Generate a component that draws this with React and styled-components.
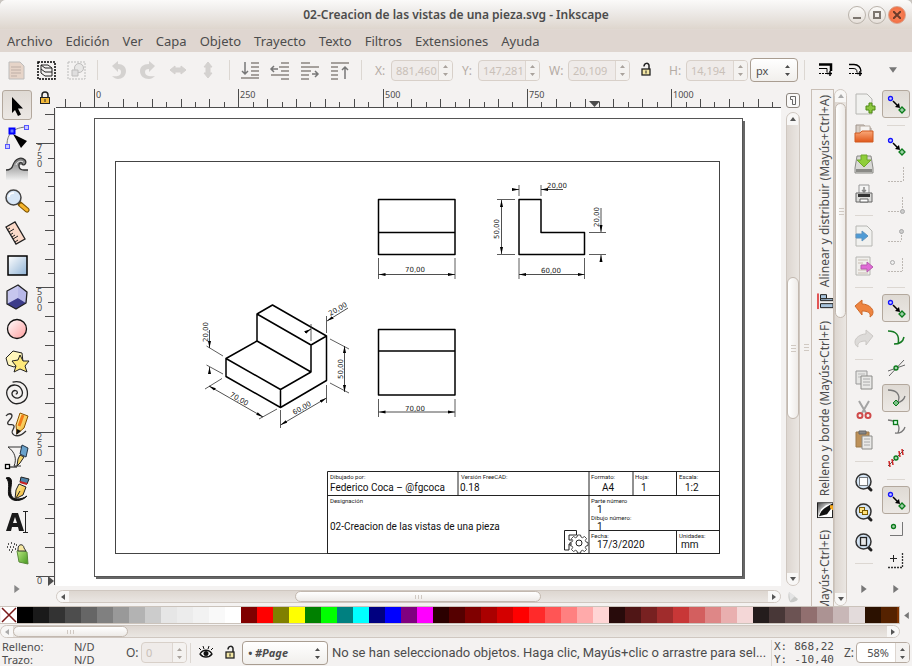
import React from "react";
import styled, { createGlobalStyle, css } from "styled-components";

const GlobalStyle = createGlobalStyle`
  * { box-sizing: border-box; }
  html, body { margin: 0; padding: 0; background: #c9c5c0; }
  body, button, input, select { font-family: "Noto Sans", "Open Sans", sans-serif; font-size: 12px; color: #4c4c4c; }
  button, input, select { margin: 0; padding: 0; border: 0; background: none; }
  svg { display: block; }
`;

/* ---------- window frame ---------- */

const Window = styled.div`
  display: flex;
  flex-direction: column;
  height: 100vh;
  overflow: hidden;
  background: #f4f2f1;
  border-radius: 6px 6px 0 0;
`;

const TitleBar = styled.header`
  display: grid;
  grid-template-columns: 64px 1fr 64px;
  align-items: center;
  flex: none;
  height: 30px;
  background: linear-gradient(#fbfaf9, #f1efed 30%, #ded6ce);
  border-bottom: 1px solid #e0d8d2;
`;

const Title = styled.h1`
  grid-column: 2;
  margin: 0;
  text-align: center;
  font-size: 12px;
  font-weight: 600;
  white-space: nowrap;
`;

const WindowButtons = styled.div`
  display: flex;
  gap: 2px;
`;

const WindowButton = styled.button`
  display: grid;
  place-items: center;
  width: 18px;
  height: 18px;
  border-radius: 50%;
  border: 1px solid ${(p) => (p.$close ? "#d9a08a" : "#b9b2aa")};
  background: ${(p) => (p.$close ? "radial-gradient(#fb8a62, #ee6537)" : "linear-gradient(#fbfaf8, #e6e0da)")};
`;

const MenuBar = styled.nav`
  display: flex;
  align-items: center;
  gap: 13px;
  flex: none;
  height: 22px;
  padding-left: 7px;
  background: #dfd6d0;
`;

const MenuItem = styled.button`
  font-size: 13px;
  line-height: 20px;
`;

/* ---------- controls ---------- */

const ToolBar = styled.div`
  display: flex;
  align-items: center;
  flex: none;
  height: 36px;
  padding: 0 4px 0 1px;
`;

const IconButton = styled.button`
  display: grid;
  place-items: center;
  flex: none;
  width: 30px;
  height: 30px;
  opacity: ${(p) => (p.$faded ? 0.5 : 1)};
  border-radius: 3px;
  ${(p) =>
    p.$pressed &&
    css`
      border: 1px solid #b3a89d;
      background: linear-gradient(#dfdad4, #ece8e4);
    `}
`;

const StatusButton = styled(IconButton)`
  width: 24px;
`;

const SnapButton = styled(IconButton)`
  width: 28px;
  height: 28px;
  margin: 1px 0;
`;

const ToolSeparator = styled.span`
  flex: none;
  width: ${(p) => (p.$narrow ? 6 : 12)}px;
  height: 20px;
  background: linear-gradient(#dcd7d2, #dcd7d2) center / 1px 100% no-repeat;
`;

const ColumnSeparator = styled.span`
  flex: none;
  width: 18px;
  height: 12px;
  background: linear-gradient(#dcd7d2, #dcd7d2) center / 100% 1px no-repeat;
`;

const Field = styled.div`
  display: flex;
  align-items: center;
  flex: none;
  margin-left: ${(p) => p.$gap}px;
`;

const FieldLabel = styled.label`
  width: ${(p) => p.$width}px;
  color: ${(p) => (p.$disabled ? "#b5aca5" : "#4c4c4c")};
`;

const SpinFrame = styled.span`
  display: flex;
  width: ${(p) => p.$width}px;
  height: 21px;
  border: 1px solid ${(p) => (p.$disabled ? "#d8d0c9" : "#b5aaa0")};
  border-radius: 4px;
  background: ${(p) => (p.$disabled ? "#efebe9" : "#ffffff")};
  overflow: hidden;
`;

const SpinInput = styled.input`
  flex: 1;
  min-width: 0;
  padding-left: 4px;
  font-size: 11px;
  text-align: ${(p) => p.$align || "left"};
  &:disabled { color: #c9c0b8; }
`;

const SpinArrows = styled.span`
  display: grid;
  place-items: center;
  width: 14px;
  border-left: 1px solid #ddd6d0;
  background: #f4f2f0;
  color: ${(p) => (p.$disabled ? "#aaa39d" : "#555555")};
`;

const ComboFrame = styled.span`
  display: flex;
  align-items: center;
  flex: none;
  width: ${(p) => p.$width}px;
  height: 24px;
  margin-left: ${(p) => p.$gap}px;
  padding: 0 6px 0 5px;
  border: 1px solid #a99d91;
  border-radius: 4px;
  background: linear-gradient(#ffffff, #f1efec);
`;

const Combo = styled.select`
  appearance: none;
  flex: 1;
  min-width: 0;
  font-size: 11px;
  font-weight: ${(p) => (p.$strong ? 700 : 400)};
  font-style: ${(p) => (p.$strong ? "italic" : "normal")};
`;

const Stretch = styled.span`
  flex: 1;
`;

/* ---------- scroll bars ---------- */

const ScrollFrame = styled.div`
  display: flex;
  flex: ${(p) => p.$fill || "1"};
  flex-direction: ${(p) => (p.$vertical ? "column" : "row")};
  min-width: 0;
  min-height: 0;
  ${(p) => (p.$vertical ? "width: 13px;" : "height: 13px;")}
  border: 1px solid #cfc7c0;
  border-radius: 7px;
  background: linear-gradient(${(p) => (p.$vertical ? "to right" : "to bottom")}, #ddd6d0, #eae6e2);
  overflow: hidden;
`;

const ScrollButton = styled.button`
  display: grid;
  place-items: center;
  flex: none;
  width: ${(p) => (p.$vertical ? 11 : 12)}px;
  height: ${(p) => (p.$vertical ? 12 : 11)}px;
  background: #f8f7f6;
`;

const ScrollGap = styled.span`
  flex: ${(p) => p.$size};
`;

const ScrollThumb = styled.span`
  display: grid;
  place-items: center;
  flex: ${(p) => p.$size};
  border: 1px solid #c2b8af;
  border-radius: 6px;
  background: linear-gradient(${(p) => (p.$vertical ? "to right" : "to bottom")}, #ffffff, #eeebe8);
`;

const Triangle = ({ dir = "down", size = 6, color = "#555" }) => {
  const d = { down: "M0 1h6l-3 4z", up: "M0 5h6l-3-4z", left: "M5 0v6l-4-3z", right: "M1 0v6l4-3z" }[dir];
  return (
    <svg width={size} height={size} viewBox="0 0 6 6" fill={color} aria-hidden="true"><path d={d} /></svg>
  );
};

const Grip = ({ vertical }) => (
  <svg width="8" height="8" viewBox="0 0 8 8" stroke="#d0c9c2" aria-hidden="true">
    <path d={vertical ? "M2 1.500h5M2 4.500h5M2 7.500h5" : "M1.500 2v4M4.500 2v4M7.500 2v4"} />
  </svg>
);

function ScrollBar({ vertical, before, size, after, label, onlyEnd, fill }) {
  const v = vertical || undefined;
  return (
    <ScrollFrame $vertical={v} $fill={fill} aria-label={label}>
      <ScrollButton $vertical={v} aria-label={`${label} −`}>
        <Triangle dir={vertical ? "up" : "left"} color={onlyEnd ? "#aaa" : "#555"} />
      </ScrollButton>
      <ScrollGap $size={before} />
      <ScrollThumb $vertical={v} $size={size}><Grip vertical={vertical} /></ScrollThumb>
      <ScrollGap $size={after} />
      <ScrollButton $vertical={v} aria-label={`${label} +`}>
        <Triangle dir={vertical ? "down" : "right"} />
      </ScrollButton>
    </ScrollFrame>
  );
}

const SpinGlyph = () => (
  <svg width="7" height="12" viewBox="0 0 7 12" fill="currentColor" aria-hidden="true">
    <path d="M1 4h5l-2.500-3zM1 9h5l-2.500 3z" />
  </svg>
);

function Spin({ id, label, value, gap, labelWidth, width = 62, disabled, plainLabel, align }) {
  return (
    <Field $gap={gap}>
      <FieldLabel htmlFor={id} $width={labelWidth} $disabled={disabled && !plainLabel}>{label}</FieldLabel>
      <SpinFrame $width={width} $disabled={disabled}>
        <SpinInput id={id} type="text" defaultValue={value} disabled={disabled} $align={align} />
        <SpinArrows $disabled={disabled}><SpinGlyph /></SpinArrows>
      </SpinFrame>
    </Field>
  );
}

/* ---------- icons ---------- */

const Icon = ({ children }) => (
  <svg width="26" height="26" viewBox="2 2 26 26" fill="none" aria-hidden="true">{children}</svg>
);

const Gradients = () => (
  <svg width="0" height="0" aria-hidden="true">
    <defs>
      <linearGradient id="gBlue" x1="0" y1="0" x2="1" y2="1"><stop stopColor="#fff" /><stop offset="1" stopColor="#8fb3d6" /></linearGradient>
      <linearGradient id="gPink" x1="0" y1="0" x2="1" y2="1"><stop stopColor="#fff" /><stop offset="1" stopColor="#ff9d9d" /></linearGradient>
      <linearGradient id="gGrey" x1="0" y1="0" x2="0" y2="1"><stop stopColor="#777" /><stop offset="1" stopColor="#f0f0f0" /></linearGradient>
      <linearGradient id="gGold" x1="0" y1="0" x2="1" y2="1"><stop stopColor="#fff7b0" /><stop offset="1" stopColor="#f0a814" /></linearGradient>
      <linearGradient id="gOrange" x1="0" y1="0" x2="0" y2="1"><stop stopColor="#f9a97a" /><stop offset="1" stopColor="#e0571a" /></linearGradient>
      <linearGradient id="gGreen" x1="0" y1="0" x2="1" y2="1"><stop stopColor="#c4f08a" /><stop offset="1" stopColor="#43961d" /></linearGradient>
      <linearGradient id="gInk" x1="0" y1="0" x2="1" y2="1"><stop stopColor="#444" /><stop offset="0.600" stopColor="#fff" /></linearGradient>
    </defs>
  </svg>
);

const toolIcons = [
  ["Seleccionar", <path key="a" d="M10 7v16l3-3 3 6 3-1.500-3-6h5z" fill="#000" />],
  ["Editar nodos", <g key="a"><path d="M5 23C5 15 8 6 24 5" stroke="#777" /><path d="M11 12l14 7-6 7z" fill="#000" /><rect x="7.500" y="6.500" width="5" height="5" fill="#6a7cff" stroke="#00f" strokeWidth="2" /><rect x="22.500" y="3.500" width="4" height="4" fill="#c8c8ff" stroke="#5555ff" /><rect x="3.500" y="22.500" width="4" height="4" fill="#c8c8ff" stroke="#5555ff" /></g>],
  ["Retocar", <g key="a"><path d="M4 26V16c3 0 6-1 7-5 2-6 8-9 12-5 2 2 1 5-1 5l-4 0c-1 3 1 5 4 5h4v10z" fill="url(#gGrey)" /><path d="M4 16c3 0 6-1 7-5 2-6 8-9 12-5 3 4-3 7-3 3-4-2-5 7 2 7h4" stroke="#333" strokeWidth="1.300" /><path d="M14 11c1-3 4-5 7-3" stroke="#eee" /></g>],
  ["Zoom", <g key="a"><path d="M18 18l7 6" stroke="#7a5200" strokeWidth="5" strokeLinecap="round" /><path d="M19 19l6 5" stroke="#f7b52c" strokeWidth="3" strokeLinecap="round" /><circle cx="11.500" cy="11.500" r="7.500" fill="#d7e6f6" stroke="#444" strokeWidth="1.500" /><path d="M7 11c0-3 2-4 5-4" stroke="#fff" strokeWidth="1.500" /></g>],
  ["Medir", <g key="a"><path d="M4 9l9-5 10 17-9 5z" fill="#fbd9c8" stroke="#222" strokeWidth="1.300" /><path d="M5 12l3-2M7 14l5-3M8 17l3-2M10 19l3-2M11 21l5-3M13 24l3-2" stroke="#222" /></g>],
  ["Rectángulo", <rect key="a" x="6" y="6" width="19" height="19" fill="url(#gBlue)" stroke="#000" strokeWidth="1.500" />],
  ["Caja 3D", <g key="a"><path d="M5 9l11-6 9 7-1 11-10 6-9-5z" fill="#9a9ad6" /><path d="M5 9l11-6v13L5 22z" fill="#c6c6ee" /><path d="M5 22l11-6 8 5-10 6z" fill="#3d3d8a" /><path d="M16 3l9 7-1 11-8-5z" fill="#b9b9e8" /><path d="M5 9l11-6 9 7-1 11-10 6-9-5z" stroke="#222" strokeWidth="1.300" strokeLinejoin="round" /></g>],
  ["Elipse", <circle key="a" cx="15" cy="15" r="9.500" fill="url(#gPink)" stroke="#111" strokeWidth="1.300" />],
  ["Estrella", <g key="a"><path d="M4 12l7-7 9 2 1 9-9 5-6-2z" fill="#fff6bb" stroke="#222" /><path d="M18 9l3 6 6 0-4 5 2 6-7-3-6 3 2-6-4-5 6-1z" fill="#ffe97a" stroke="#222" /></g>],
  ["Espiral", <path key="a" d="M15 16c1-2-2-3-3-1-2 3 2 6 5 4 5-3 3-10-3-10-7 0-10 7-7 12 4 6 14 4 17-1 3-6 1-13-5-15C11 2 4 6 3 15" stroke="#222" strokeWidth="1.300" transform="rotate(70 14.500 15)" />],
  ["Lápiz", <g key="a"><path d="M4 6c2-3 6-3 6 0s-6 6-4 8 5-1 6 2-5 6 0 9c4 2 8 0 12-4" stroke="#333" strokeWidth="1.300" /><path d="M18 3l8 3-4 12-7 6-1-9z" fill="url(#gGold)" stroke="#8a5200" /><path d="M14 25l1-6 4 2z" fill="#111" /><path d="M21 5l-4 11" stroke="#f47c16" strokeWidth="3" /></g>],
  ["Pluma", <g key="a"><path d="M6 5l14 0M6 5c7 5 9 12 6 19M12 24h7" stroke="#333" /><rect x="3.500" y="22.500" width="4" height="4" fill="#fff" stroke="#000" strokeWidth="1.300" /><path d="M8 25h7" stroke="#000" /><path d="M20 3l6 3-2 9-6-3z" fill="#6aa2cb" stroke="#234" /><path d="M18 13l4 2-4 6-3 3 1-7z" fill="#f5d56b" stroke="#222" /></g>],
  ["Caligrafía", <g key="a"><path d="M4 4c6-2 6 3 5 9s0 12 6 12c4 0 7-1 10-3-4 5-15 7-18 0C5 17 9 8 4 4z" fill="#111" stroke="#111" /><path d="M19 3l8 2-2 5-7-2z" fill="#4f82a8" stroke="#222" /><path d="M18 8l7 2" stroke="#c22" strokeWidth="2" /><path d="M17 10l7 3-3 8-8 4 1-9z" fill="url(#gGold)" stroke="#222" /><path d="M14 24l4-7" stroke="#222" /></g>],
  ["Texto", <g key="a"><path d="M4 25L10 7h6l6 18h-5l-1-4h-6l-1 4zM11 17h4l-2-6z" fill="#1a1a1a" fillRule="evenodd" /><path d="M21 5.500h5M21 26.500h5M23.500 5v21" stroke="#222" /></g>],
  ["Rociador", <g key="a"><path d="M15 13l4-2 6 3 1 12-9-2z" fill="url(#gGreen)" stroke="#5a8a3a" /><path d="M16 11c0-6 6-5 6-1l2 3-8 0z" fill="#f7e8a0" stroke="#333" /><path d="M6 6h1M9 5h1M12 6h1M5 9h1M8 9h1M11 9h1M14 7h1M7 12h1M10 12h1M13 11h1M9 14h1" stroke="#222" strokeWidth="1.500" /></g>],
];

const Sheet = () => <path d="M7 5h11l5 5v15H7z" fill="#f1f1ef" stroke="#b6b6b2" />;
const Lens = ({ children }) => (
  <g><path d="M19 20l3 3" stroke="#222" strokeWidth="3" strokeLinecap="round" /><circle cx="14.500" cy="14.500" r="7.500" fill="#d5e5f5" stroke="#333" strokeWidth="1.500" />{children}</g>
);

const commandIcons = [
  ["Nuevo", <g key="a"><Sheet /><path d="M17 17h3v-3h3v3h3v4h-3v3h-3v-3h-3z" fill="#8cc63f" stroke="#4e8a14" /></g>],
  ["Abrir", <g key="a"><path d="M7 6h8l2 3h5v7H7z" fill="#d7cfc8" stroke="#a0948a" /><path d="M11 7h10v8H11z" fill="#f6f4f2" stroke="#b9aea4" /><path d="M6 14h5l2-2h11v11H6z" fill="url(#gOrange)" stroke="#d05a20" /></g>],
  ["Guardar", <g key="a"><path d="M8 7h14l2 12v5H6v-5z" fill="#d9d9d6" stroke="#8a8a86" /><path d="M7 20h16v3H7z" fill="#8a8a86" /><path d="M12 6h6v5h4l-7 7-7-7h4z" fill="#8fce3a" stroke="#6fa62a" /></g>],
  ["Imprimir", <g key="a"><path d="M10 6h10v9H10z" fill="#f4f4f4" stroke="#999" /><path d="M15 8v5m-2-2l2 2 2-2" stroke="#888" strokeWidth="1.500" /><path d="M7 14h16v9H7z" fill="#dcdcda" stroke="#666" /><path d="M9 15h12v3H9z" fill="#333" /><path d="M11 20h8v3h-8z" fill="#fff" stroke="#666" /></g>],
  null,
  ["Importar", <g key="a"><Sheet /><path d="M7 13h6v-3l6 5-6 5v-3H7z" fill="#4e9bd6" stroke="#5f93be" /></g>],
  ["Exportar", <g key="a"><path d="M7 6h14v18H7z" fill="#f0efec" stroke="#b6b6b2" /><path d="M9 9h10M9 12h5M9 19h10M9 22h10" stroke="#c9bdb2" /><path d="M12 14h6v-3l6 5-6 5v-3h-6z" fill="#e06bd6" stroke="#b75cae" /></g>],
  null,
  ["Deshacer", <path key="a" d="M6 13l7-6v4c6 0 11 4 11 8 0 2-1 4-3 5 1-4-2-6-8-6v4z" fill="#ee8440" stroke="#cf6a2a" />],
  ["Rehacer", <path key="a" d="M24 13l-7-6v4C11 11 6 15 6 19c0 2 1 4 3 5-1-4 2-6 8-6v4z" fill="#dddbd9" stroke="#cbc8c5" />],
  null,
  ["Copiar", <g key="a"><path d="M7 6h11v13H7z" fill="#e6e6e4" stroke="#999" /><path d="M9 9h7M9 12h7" stroke="#bbb" /><path d="M12 11h11v13H12z" fill="#e9e9e7" stroke="#8b8b88" /><path d="M14 14h7M14 17h7M14 20h7" stroke="#aaa" /></g>],
  ["Cortar", <g key="a"><path d="M10 6l7 12M20 6l-7 12" stroke="#a4a4a4" strokeWidth="2" /><ellipse cx="11" cy="20.500" rx="2.500" ry="2.500" stroke="#cf4a4a" strokeWidth="2" /><ellipse cx="19" cy="20.500" rx="2.500" ry="2.500" stroke="#cf4a4a" strokeWidth="2" /></g>],
  ["Pegar", <g key="a"><path d="M7 7h13v15H7z" fill="#bd9159" stroke="#9d7a4c" /><path d="M10 6h7v3h-7z" fill="#888" stroke="#666" /><path d="M13 11h10v13H13z" fill="#e9e9e7" stroke="#8b8b88" /><path d="M15 14h6M15 17h6M15 20h6" stroke="#aaa" /></g>],
  null,
  ["Zoom a la selección", <Lens key="a"><rect x="10.500" y="10.500" width="8" height="8" fill="#fff" stroke="#000" strokeDasharray="1 1" /></Lens>],
  ["Zoom al dibujo", <Lens key="a"><rect x="10.500" y="10.500" width="5" height="5" fill="#ffe58a" stroke="#7a5a00" /><rect x="13.500" y="13.500" width="5" height="4" fill="#ffe27a" stroke="#7a5a00" /></Lens>],
  ["Zoom a la página", <Lens key="a"><rect x="11.500" y="10.500" width="6" height="8" fill="#e8e8e8" stroke="#222" strokeWidth="1.300" /></Lens>],
  null,
];

const Node = ({ x, y, blue }) => <circle cx={x} cy={y} r="2" fill={blue ? "#c9c9ff" : "#a9d0ae"} stroke={blue ? "#1414ff" : "#0a7a1a"} strokeWidth="1.300" />;
const SnapLink = () => (
  <g><path d="M12 12l5 5" stroke="#000" strokeWidth="1.500" /><path d="M19 19l-5-1 4-4z" fill="#000" /><Node x={9.5} y={9.5} blue /><path d="M21 18l3 3-3 3-3-3z" fill="#9ccfa6" stroke="#0a7a1a" strokeWidth="1.300" /></g>
);
const faint = { stroke: "#bdb8b3", strokeDasharray: "2 1" };

const snapIcons = [
  ["Activar ajuste", <SnapLink key="a" />, true],
  null,
  ["Ajustar cajas", <SnapLink key="a" />],
  ["Bordes de caja", <path key="a" d="M7 20.500h15M22.500 6v15" {...faint} />],
  ["Esquinas de caja", <g key="a"><path d="M7 20.500h14M21.500 6v14" {...faint} /><circle cx="21.500" cy="20.500" r="2" fill="#ccc" stroke="#aaa" /></g>],
  ["Puntos medios de caja", <g key="a"><path d="M7 20.500h13M20.500 8v12" {...faint} /><circle cx="20.500" cy="10.500" r="2" fill="#ccc" stroke="#aaa" /></g>],
  ["Centros de caja", <g key="a"><path d="M7 20.500h14M21.500 7v13" {...faint} /><circle cx="11.500" cy="11.500" r="2" fill="#eee" stroke="#aaa" /></g>],
  null,
  ["Ajustar nodos", <SnapLink key="a" />, true],
  ["Trayectos", <path key="a" d="M7 8c8 0 12 4 10 13M13 21c5 0 9-2 10-7" stroke="#157a22" strokeWidth="1.500" />],
  ["Intersecciones", <g key="a"><path d="M8 23L23 7M7 18l17-6" stroke="#666" /><Node x={15} y={15} /></g>],
  ["Nodos vértice", <g key="a"><path d="M7 7c8 0 13 4 10 12M16 20c4-1 7-3 8-7" stroke="#777" strokeWidth="1.300" /><path d="M15 17l3 3-3 3-3-3z" fill="#7bbf87" stroke="#0a7a1a" /></g>, true],
  ["Nodos suaves", <g key="a"><path d="M7 7c9 1 13 5 10 13M14 20c5 1 9-2 10-6" stroke="#777" strokeWidth="1.300" /><rect x="12.500" y="7.500" width="4" height="4" fill="#dfe" stroke="#0a7a1a" strokeWidth="1.300" /></g>],
  ["Puntos medios", <g key="a"><path d="M7 23L23 7" stroke="#555" /><path d="M8 18l1 6M11 16l1 6M18 8l1 6M21 6l1 6" stroke="#c22" strokeWidth="1.500" /><Node x={15} y={15} /></g>],
  null,
  ["Ajustar otros puntos", <SnapLink key="a" />, true],
  ["Centros de objeto", <g key="a"><path d="M9 20.500h12.500V7" stroke="#777" /><Node x={12.5} y={11.500} /></g>],
  ["Centros de rotación", <g key="a"><path d="M7 22.500h14.500V8" stroke="#333" strokeWidth="1.300" strokeDasharray="2 1" /><path d="M9 13.500h7M12.500 10v7" stroke="#222" /></g>],
];

const Bars = ({ d, arrow }) => (
  <g><path d={d} stroke="#a5a09c" strokeWidth="2" /><path d={arrow} stroke="#777" strokeWidth="1.500" /></g>
);

const barIcons = [
  ["Seleccionar todo", <g key="a"><path d="M8 7h11l4 4v13H8z" fill="#d9b7a0" stroke="#888" /><path d="M10 12h10M10 15h10M10 18h10M10 21h6" stroke="#8a6c5c" /></g>, true],
  ["Seleccionar en capas", <g key="a"><rect x="7" y="7" width="17" height="17" stroke="#000" strokeWidth="1.500" strokeDasharray="2 1" /><path d="M10 10h7l4 3h-7zM10 14l4 3h7M10 18l4 3h7M10 10v8M21 13v8" stroke="#222" /></g>],
  ["Deseleccionar", <g key="a"><rect x="7" y="7" width="17" height="17" stroke="#888" strokeDasharray="2 1" /><circle cx="18" cy="13" r="4.500" fill="#ddd" stroke="#888" /><path d="M11 15h6v6h-6z" fill="#ccc" stroke="#888" /></g>, true],
  null,
  ["Rotar a la izquierda", <path key="a" d="M9 11l6-5v3c5 0 8 3 8 7 0 5-4 8-8 8-2 0-4-1-6-3 5 1 9 0 9-4 0-2-1-3-3-3v3z" fill="#b6b3b1" />, true],
  ["Rotar a la derecha", <path key="a" d="M22 11l-6-5v3c-6 0-9 3-9 7 0 5 4 8 9 8 2 0 4-1 6-3-5 1-10 0-10-4 0-2 1-3 4-3v3z" fill="#b6b3b1" />, true],
  ["Reflejar horizontalmente", <path key="a" d="M7 15l5-4v2h6v-2l5 4-5 4v-2h-6v2z" fill="#b6b3b1" stroke="#b5b1ae" />, true],
  ["Reflejar verticalmente", <path key="a" d="M15 7l4 5h-2v6h2l-4 5-4-5h2v-6h-2z" fill="#b6b3b1" stroke="#b5b1ae" />, true],
  null,
  ["Bajar al fondo", <Bars key="a" d="M16 8h8M16 12h8M16 16h8M16 20h8M6 23h18" arrow="M10 7v12M7 16l3 3 3-3" />],
  ["Bajar", <Bars key="a" d="M16 8h8M14 12h10M16 16h8M6 20h18M16 24h8" arrow="M13 14H7M9 11l-3 3 3 3" />],
  ["Elevar", <Bars key="a" d="M6 8h9M6 12h18M6 16h10M6 20h8M6 24h8" arrow="M17 19h6M20 16l3 3-3 3" />],
  ["Elevar a primer plano", <Bars key="a" d="M6 8h18M6 12h7M6 16h7M6 20h7M6 24h7" arrow="M20 24V12M17 15l3-3 3 3" />],
  null,
];

const LockOpen = () => (
  <Icon><path d="M13 11.500c0-4 5-4 5-1v4" stroke="#222" strokeWidth="1.500" /><rect x="11" y="14" width="8" height="6" fill="#f2e6a4" stroke="#222" strokeWidth="1.300" /><path d="M15 15.500v3" stroke="#222" /></Icon>
);

function IconRow({ items }) {
  return items.map((it, i) =>
    it ? <IconButton key={i} aria-label={it[0]} $faded={it[2]}><Icon>{it[1]}</Icon></IconButton> : <ToolSeparator key={i} />
  );
}

/* ---------- workspace ---------- */

const Workspace = styled.main`
  display: flex;
  flex: 1;
  min-height: 0;
`;

const ToolBox = styled.aside`
  display: flex;
  flex-direction: column;
  align-items: center;
  flex: none;
  gap: 2px;
  width: 34px;
  padding-top: 2px;
`;

const EditorGrid = styled.section`
  display: grid;
  grid-template-columns: 22px 1fr 5px 14px;
  grid-template-rows: 20px 1fr 3px 15px 2px;
  flex: 1;
  min-width: 0;
`;

const Cell = styled.div`
  display: flex;
  grid-area: ${(p) => p.$area};
  min-width: 0;
  min-height: 0;
  overflow: hidden;
  background: ${(p) => (p.$paper ? "#ffffff" : "transparent")};
  align-items: ${(p) => (p.$center ? "center" : "stretch")};
  justify-content: ${(p) => (p.$center ? "center" : "flex-start")};
  padding: ${(p) => p.$pad || "0"};
`;

const FullSvg = styled.svg`
  flex: 1;
  width: 100%;
  height: 100%;
`;

const SquareButton = styled.button`
  display: grid;
  place-items: center;
  width: 14px;
  height: 15px;
  border: 1px solid #8c857e;
  border-radius: 3px;
  background: #faf9f8;
`;

const PanelHandle = styled.div`
  display: grid;
  place-items: center;
  flex: none;
  width: 11px;
`;

const Dock = styled.aside`
  display: flex;
  flex: none;
  width: 36px;
  padding-top: 1px;
`;

const DockTabs = styled.div`
  display: flex;
  flex-direction: column;
  align-items: flex-end;
  gap: 12px;
  width: 23px;
  padding-top: 5px;
  overflow: hidden;
  border: 1px solid #c9bfb6;
  border-bottom: 0;
`;

const DockTab = styled.button`
  display: flex;
  flex: none;
  align-items: center;
  gap: 6px;
  width: 16px;
  writing-mode: vertical-rl;
  transform: rotate(180deg);
  font-size: 12px;
  line-height: 16px;
  white-space: nowrap;
`;

const IconColumn = styled.aside`
  display: flex;
  flex-direction: column;
  align-items: center;
  flex: none;
  width: ${(p) => p.$width}px;
  padding: 1px ${(p) => p.$inset || 0}px 0 0;
`;

const Overflow = styled.button`
  display: grid;
  place-items: center;
  height: 14px;
  margin: auto 0 10px 0;
`;

const STEP = 144.3;

function TopRuler() {
  const ticks = [];
  for (let i = -2; i < 110; i++) {
    const x = Math.round(38 + (i * STEP) / 10) + 0.5;
    const h = i % 10 === 0 ? 18 : i % 2 === 0 ? 8 : 5;
    ticks.push(<path key={i} d={`M${x} ${19 - h}V19`} />);
  }
  return (
    <FullSvg aria-label="Regla horizontal">
      <g stroke="#4c4c4c">{ticks}<path d="M0 19.500H2400" /></g>
      <g fill="#4c4c4c" fontSize="9">
        {[0, 1, 2, 3, 4].map((n) => <text key={n} x={Math.round(40 + n * STEP)} y="10">{n * 250}</text>)}
      </g>
      <path d="M533 13h11l-5.500 6z" fill="#4c4c4c" />
    </FullSvg>
  );
}

function LeftRuler() {
  const ticks = [];
  for (let i = 0; i < 33; i++) {
    const y = Math.round(468 - (i * STEP) / 10) + 0.5;
    const w = i % 10 === 0 ? 18 : i % 2 === 0 ? 9 : 6;
    ticks.push(<path key={i} d={`M${20 - w} ${y}H20`} />);
  }
  return (
    <FullSvg aria-label="Regla vertical">
      <g stroke="#4c4c4c">{ticks}<path d="M20.500 0V477" /></g>
      <g fill="#4c4c4c" fontSize="9">
        {["0", "250", "500", "750"].map((s, n) =>
          s.split("").map((c, k) => <text key={s + k} x="3" y={Math.round(468 - n * STEP) + 8 + k * 8}>{c}</text>)
        )}
      </g>
      <path d="M14 468v10l6-5z" fill="#4c4c4c" />
    </FullSvg>
  );
}

const Thin = ({ d }) => <path d={d} stroke="#333" strokeWidth="0.800" />;
const Arrow = ({ d, both }) => (
  <path d={d} stroke="#222" strokeWidth="0.800" markerEnd="url(#tip)" markerStart={both ? "url(#tip)" : undefined} />
);
const DimText = ({ x, y, turn = 0, children }) => (
  <text x={x} y={y} textAnchor="middle" transform={turn ? `rotate(${turn} ${x} ${y})` : undefined}>{children}</text>
);

function Drawing() {
  return (
    <FullSvg aria-label="Lienzo">
      <defs>
        <marker id="tip" viewBox="0 0 7 4" refX="7" refY="2" markerWidth="7" markerHeight="4" markerUnits="userSpaceOnUse" orient="auto-start-reverse">
          <path d="M0 0.500L7 2 0 3.500z" fill="#000" />
        </marker>
      </defs>
      <g transform="translate(-56 -108)" fill="none">
        <path d="M96 576v3h649V121h-3v455z" fill="#666" />
        <rect x="94.500" y="118.500" width="648" height="458" fill="#fff" stroke="#555" />
        <rect x="115.500" y="161.500" width="604" height="392" stroke="#444" />
        <g stroke="#000" strokeWidth="1.500" strokeLinejoin="round">
          <path d="M378.500 199.500H455V254.500H378.500zM378.500 232.500H455" />
          <path d="M519 199.500h22v33h43.500v22H519z" />
          <path d="M378.500 329.500H455V395H378.500zM378.500 351H455" />
          <path d="M257 314l15.500-9L326.500 336l-15.500 9zM257 314v27l54 31v-27M257 341l-31 17.500 54.500 31L311 372M226 358.500v18l54.500 31v-18M280.500 407.500l46-27V336" />
        </g>
        <Thin d="M378.500 258v21M455 258v21M519 258v21M584.500 258v21M497 199.500h18M497 254.500h18M519 185v11M541 185v11M589 232.500h17M589 254.500h17M378.500 399v18M455 399v18" />
        <Arrow both d="M378.500 274.500H455" />
        <Arrow both d="M519 274.500h65.500" />
        <Arrow both d="M501.500 200v54" />
        <Arrow both d="M378.500 412H455" />
        <Arrow d="M513 189.500h6" />
        <Arrow d="M563 189.500h-22" />
        <Arrow d="M601 208v24" />
        <Arrow d="M601 260v-5" />
        <Thin d="M205 389l17-10.500M259 419l18-10M280.500 410v18M326.500 385v18M330 339l19 10M330 383l19 10M206.500 346l16.500 10M206.500 365l16.500 9M326.500 316v17M311 324v17" />
        <Arrow both d="M209 386l54 31" />
        <Arrow both d="M280.500 425l46-27" />
        <Arrow both d="M344.500 346v46" />
        <Arrow d="M209.500 330v18" />
        <Arrow d="M209.500 373v-6" />
        <Arrow d="M348 308l-21 13" />
        <Arrow d="M306 332l5-3" />
        <g fill="#222" fontFamily="DejaVu Sans, sans-serif" fontSize="7">
          <DimText x={415} y={272}>70,00</DimText>
          <DimText x={551} y={273}>60,00</DimText>
          <DimText x={557} y={188}>20,00</DimText>
          <DimText x={499} y={229} turn={-90}>50,00</DimText>
          <DimText x={599} y={217} turn={-90}>20,00</DimText>
          <DimText x={415} y={411}>70,00</DimText>
          <DimText x={238} y={401} turn={30}>70,00</DimText>
          <DimText x={303} y={410} turn={-30}>60,00</DimText>
          <DimText x={343} y={369} turn={-90}>50,00</DimText>
          <DimText x={208} y={332} turn={-90}>20,00</DimText>
          <DimText x={339} y={311} turn={-30}>20,00</DimText>
        </g>
        <path d="M327.500 471.500h392v82h-392zM327.500 495.500h392M458 471.500v24M589 471.500v82M633 471.500v24M676.500 471.500v24M589 530.500h130.500M676.500 530.500v23" stroke="#222" />
        <g fill="#222" fontFamily="Roboto, sans-serif" fontSize="6">
          <text x="330" y="479">Dibujado por:</text>
          <text x="461" y="479">Versión FreeCAD:</text>
          <text x="591" y="479">Formato:</text>
          <text x="635" y="479">Hoja:</text>
          <text x="679" y="479">Escala:</text>
          <text x="330" y="503">Designación</text>
          <text x="591" y="503">Parte número</text>
          <text x="591" y="520">Dibujo número:</text>
          <text x="591" y="538">Fecha:</text>
          <text x="679" y="538">Unidades:</text>
        </g>
        <g fill="#111" fontFamily="Roboto, sans-serif" fontSize="10">
          <text x="330" y="491">Federico Coca – @fgcoca</text>
          <text x="460" y="491">0.18</text>
          <text x="602" y="491">A4</text>
          <text x="641" y="491">1</text>
          <text x="685" y="491">1:2</text>
          <text x="330" y="530">02-Creacion de las vistas de una pieza</text>
          <text x="597" y="513">1</text>
          <text x="597" y="530">1</text>
          <text x="597" y="548">17/3/2020</text>
          <text x="681" y="548">mm</text>
        </g>
        <path d="M572 535h4.500v-4.500h-12V550h4.500v-6h3M572 535h-3v5h3" stroke="#222" />
        <g stroke="#222">
          <circle cx="579" cy="543" r="3" />
          <path d="M577.500 535h3l.5 2 1.500.7 2-1.200 2 2-1.200 2 .7 1.500 2 .5v3l-2 .5-.7 1.500 1.200 2-2 2-2-1.200-1.500.7-.5 2h-3l-.5-2-1.500-.7-2 1.200-2-2 1.200-2-.7-1.500-2-.5v-3l2-.5.7-1.500-1.200-2 2-2 2 1.200 1.500-.7z" strokeWidth="0.800" />
        </g>
      </g>
    </FullSvg>
  );
}

/* ---------- palette and status ---------- */

const PaletteRow = styled.div`
  display: flex;
  flex: none;
  align-items: center;
  height: 18px;
`;

const Swatches = styled.div`
  display: flex;
  flex: 1;
  min-width: 0;
  overflow: hidden;
  padding-left: 1px;
  border: solid #cbc3bb;
  border-width: 1px 1px 1px 0;
`;

const Swatch = styled.button`
  flex: none;
  width: 16px;
  height: 16px;
  background: ${(p) => p.$color};
`;

const PaletteEnd = styled.button`
  display: grid;
  place-items: center;
  width: 12px;
  height: 16px;
`;

const PaletteScroll = styled.div`
  display: flex;
  flex: none;
  padding: 1px 12px 1px 0;
`;

const StatusBar = styled.footer`
  display: flex;
  align-items: center;
  flex: none;
  height: 27px;
  padding: 0 2px;
`;

const StyleGrid = styled.div`
  display: grid;
  grid-template-columns: 72px 51px;
  flex: none;
  line-height: 13px;
  font-size: 11px;
`;

const Message = styled.output`
  flex: 1;
  min-width: 0;
  padding-left: 4px;
  font-family: Roboto, "Noto Sans", sans-serif;
  font-size: 13px;
  white-space: nowrap;
  overflow: hidden;
  text-overflow: ellipsis;
`;

const Coordinates = styled.div`
  display: grid;
  grid-template-columns: 16px 1fr;
  flex: none;
  width: 67px;
  margin-left: 4px;
  padding: 0 4px 0 2px;
  border-left: 1px solid #dcd7d2;
  font-family: "DejaVu Sans Mono", monospace;
  font-size: 11px;
  line-height: 13px;
`;

const CoordValue = styled.span`
  text-align: right;
`;

const palette = (
  "000000 1a1a1a 333333 4d4d4d 666666 808080 999999 b3b3b3 cccccc e6e6e6 ececec f2f2f2 f9f9f9 ffffff " +
  "800000 ff0000 808000 ffff00 008000 00ff00 008080 00ffff 000080 0000ff 800080 ff00ff " +
  "2b0000 550000 800000 aa0000 d40000 ff0000 ff2a2a ff5555 ff8080 ffaaaa ffd5d5 " +
  "280b0b 501616 782121 a02c2c c83737 d35f5f de8787 e9afaf f4d7d7 " +
  "241c1c 483737 6c5353 916f6f ac9393 c8b7b7 e3dbdb 2b1100 552200 803300"
).split(" ");

const menus = ["Archivo", "Edición", "Ver", "Capa", "Objeto", "Trayecto", "Texto", "Filtros", "Extensiones", "Ayuda"];

export default function App() {
  return (
    <Window>
      <GlobalStyle />
      <TitleBar>
        <Title>02-Creacion de las vistas de una pieza.svg - Inkscape</Title>
        <WindowButtons>
          <WindowButton aria-label="Minimizar"><svg width="8" height="8" stroke="#7d766f" strokeWidth="2"><path d="M0 7h8" /></svg></WindowButton>
          <WindowButton aria-label="Maximizar"><svg width="8" height="8" stroke="#7d766f" strokeWidth="2" fill="none"><path d="M1 1h6v6H1z" /></svg></WindowButton>
          <WindowButton $close aria-label="Cerrar"><svg width="8" height="8" stroke="#6b3b2a" strokeWidth="2"><path d="M0 0l8 8M8 0L0 8" /></svg></WindowButton>
        </WindowButtons>
      </TitleBar>
      <MenuBar>{menus.map((m) => <MenuItem key={m}>{m}</MenuItem>)}</MenuBar>
      <ToolBar>
        <IconRow items={barIcons} />
        <Spin id="px" label="X:" value="881,460" gap={8} labelWidth={16} disabled />
        <Spin id="py" label="Y:" value="147,281" gap={9} labelWidth={16} disabled />
        <Spin id="pw" label="W:" value="20,109" gap={9} labelWidth={19} disabled />
        <Field $gap={1}><IconButton aria-label="Bloquear proporción"><LockOpen /></IconButton></Field>
        <Spin id="ph" label="H:" value="14,194" gap={8} labelWidth={17} disabled />
        <ComboFrame $width={48} $gap={2}>
          <Combo aria-label="Unidad"><option>px</option></Combo><SpinGlyph />
        </ComboFrame>
        <ToolSeparator />
        <IconButton aria-label="Escalar trazo"><Icon><path d="M9 9.500h12V16" stroke="#000" strokeWidth="2.500" /><path d="M9 13.500h8v4" stroke="#000" /><path d="M9 18.500h8" stroke="#000" strokeDasharray="2 1" /><path d="M17 18.500h5M20 16v5" stroke="#000" strokeWidth="1.500" /></Icon></IconButton>
        <IconButton aria-label="Escalar esquinas"><Icon><path d="M9 9.500h5c4 0 7 3 7 7" stroke="#000" strokeWidth="1.500" /><path d="M9 13.500h4c3 0 4 1 4 4" stroke="#000" /><path d="M9 18.500h8" stroke="#000" strokeDasharray="2 1" /><path d="M17 18.500h5M20 16v5" stroke="#000" strokeWidth="1.500" /></Icon></IconButton>
        <Stretch />
        <IconButton aria-label="Más opciones"><Triangle size={8} color="#777" /></IconButton>
      </ToolBar>

      <Workspace>
        <ToolBox>
          {toolIcons.map(([name, art], i) => (
            <IconButton key={name} aria-label={name} $pressed={i === 0}><Icon>{art}</Icon></IconButton>
          ))}
          <Overflow aria-label="Más herramientas"><Triangle dir="right" size={8} color="#888" /></Overflow>
        </ToolBox>

        <EditorGrid>
          <Cell $area="1 / 1" $center>
            <svg width="12" height="14" viewBox="0 0 12 14" fill="none" role="img" aria-label="Guías bloqueadas">
              <path d="M3 7V4c0-4 6-4 6 0v3" stroke="#222" strokeWidth="1.500" /><rect x="1.500" y="6.500" width="9" height="6" fill="#f3b93a" stroke="#222" /><path d="M6 8v3" stroke="#222" />
            </svg>
          </Cell>
          <Cell $area="1 / 2"><TopRuler /></Cell>
          <Cell $area="1 / 4" $pad="5px 0 0 0">
            <SquareButton aria-label="Ajustar zoom"><svg width="8" height="9" viewBox="0 0 8 9" fill="none" stroke="#666"><path d="M1.500 3.500v-3h5v8h-3v-5z" /></svg></SquareButton>
          </Cell>
          <Cell $area="2 / 1"><LeftRuler /></Cell>
          <Cell $area="2 / 2" $paper><Drawing /></Cell>
          <Cell $area="2 / 4" $pad="4px 0 0 0"><ScrollBar vertical label="Desplazamiento vertical" before={153} size={141} after={155} /></Cell>
          <Cell $area="4 / 2" $pad="1px 0 1px 0"><ScrollBar label="Desplazamiento horizontal" before={227} size={245} after={228} /></Cell>
          <Cell $area="4 / 4" $center>
            <svg width="12" height="12" viewBox="0 0 12 12" aria-hidden="true"><path d="M2 1l9 7c-1 2-5 4-8 3-2-3-2-7-1-10z" fill="#c9cac8" /><path d="M2 1l6 4-5 5z" fill="#e4e4e4" /></svg>
          </Cell>
        </EditorGrid>

        <PanelHandle><Grip vertical /></PanelHandle>
        <Dock>
          <DockTabs>
            <DockTab>
              <svg width="16" height="16" viewBox="0 0 16 16" fill="none"><g transform="rotate(180 8 8)"><path d="M1 0v16" stroke="#d22" strokeWidth="1.500" /><path d="M3.500 10.500H16v4H3.500zM3.500 5.500H16v2H3.500z" fill="#a9c4dd" stroke="#222" /><path d="M3.500 1.500h6v4h-6z" fill="#a9c4dd" stroke="#222" /></g></svg>
              Alinear y distribuir (Mayús+Ctrl+A)
            </DockTab>
            <DockTab>
              <svg width="16" height="16" viewBox="0 0 16 16"><g transform="rotate(180 8 8)"><rect x="0.500" y="0.500" width="15" height="15" fill="url(#gInk)" stroke="#222" /><path d="M1 15l3-8 5-4 7-2v6l-5 4z" fill="#fff" /><path d="M2 14C4 8 8 5 16 1v3l-6 8z" fill="#111" /><path d="M13 3h3v5l-3-2z" fill="#f5a71b" /></g></svg>
              Relleno y borde (Mayús+Ctrl+F)
            </DockTab>
            <DockTab>(Mayús+Ctrl+E)</DockTab>
          </DockTabs>
          <ScrollBar vertical fill="none" label="Paneles" onlyEnd before={1} size={214} after={276} />
        </Dock>

        <IconColumn $width={34}>
          {commandIcons.map((it, i) => it
            ? <IconButton key={i} aria-label={it[0]}><Icon>{it[1]}</Icon></IconButton>
            : <ColumnSeparator key={i} />)}
          <Overflow aria-label="Más órdenes"><Triangle dir="right" size={8} color="#777" /></Overflow>
        </IconColumn>
        <IconColumn $width={31} $inset={2}>
          {snapIcons.map((it, i) => it
            ? <SnapButton key={i} aria-label={it[0]} $pressed={it[2]}><Icon>{it[1]}</Icon></SnapButton>
            : <ColumnSeparator key={i} />)}
          <Overflow aria-label="Más ajustes"><Triangle dir="right" size={8} color="#777" /></Overflow>
        </IconColumn>
      </Workspace>

      <PaletteRow>
        <Swatches>
          <Swatch $color="#ffffff" aria-label="Ninguno">
            <svg width="16" height="16" stroke="#7a1a1a" strokeWidth="1.500"><path d="M1 1l14 14M15 1L1 15" /></svg>
          </Swatch>
          {palette.map((c, i) => <Swatch key={i} $color={`#${c}`} aria-label={`#${c}`} />)}
        </Swatches>
        <PaletteEnd aria-label="Menú de paleta"><Triangle dir="left" size={7} color="#777" /></PaletteEnd>
      </PaletteRow>
      <PaletteScroll><ScrollBar label="Paleta" onlyEnd before={0} size={113} after={760} /></PaletteScroll>

      <StatusBar>
        <StyleGrid>
          <span>Relleno:</span><span>N/D</span>
          <span>Trazo:</span><span>N/D</span>
        </StyleGrid>
        <Spin id="op" label="O:" value="0" gap={1} labelWidth={15} width={46} disabled plainLabel />
        <ToolSeparator $narrow />
        <StatusButton aria-label="Visibilidad de capa">
          <Icon><path d="M9 16c3-5 9-5 12 0-3 4-9 4-12 0z" fill="#fff" stroke="#111" strokeWidth="1.300" /><circle cx="15" cy="15.500" r="2.500" fill="#111" /><path d="M10 12L8 10M13 11l-1-3M17 11l1-3M20 12l2-2" stroke="#111" /></Icon>
        </StatusButton>
        <StatusButton aria-label="Bloqueo de capa"><LockOpen /></StatusButton>
        <ComboFrame $width={86} $gap={1}>
          <Combo $strong aria-label="Capa"><option>• #Page</option></Combo><SpinGlyph />
        </ComboFrame>
        <Message>No se han seleccionado objetos. Haga clic, Mayús+clic o arrastre para sel...</Message>
        <Coordinates>
          <span>X:</span><CoordValue>868,22</CoordValue>
          <span>Y:</span><CoordValue>-10,40</CoordValue>
        </Coordinates>
        <Spin id="zoom" label="Z:" value="58%" gap={6} labelWidth={12} width={54} align="center" />
      </StatusBar>
      <Gradients />
    </Window>
  );
}
